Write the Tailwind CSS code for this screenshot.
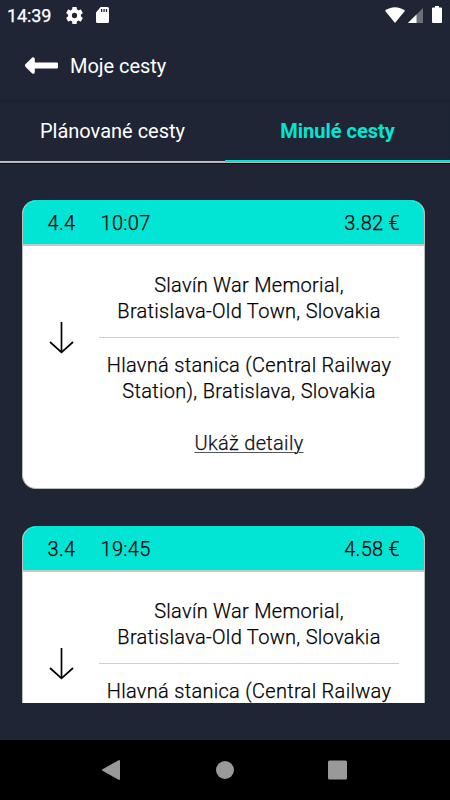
<!DOCTYPE html>
<html lang="sk">
<head>
<meta charset="utf-8">
<title>Moje cesty</title>
<script src="https://cdn.jsdelivr.net/npm/@tailwindcss/browser@4"></script>
</head>
<body class="flex h-[800px] w-[450px] flex-col overflow-hidden bg-[#1f2535] font-[Roboto,sans-serif] text-white">
  <div class="flex h-[31px] shrink-0 items-center pl-[7px] pr-[8px]">
    <span class="w-[45px] whitespace-nowrap text-[18px] leading-[31px] tracking-[-0.1px] [-webkit-text-stroke:0.25px_currentColor]">14:39</span>
    <svg class="ml-[14px] h-[17px] w-[17px]" viewBox="2 2 20 20" fill="currentColor"><path d="M19.43 12.98c.04-.32.07-.64.07-.98s-.03-.66-.07-.98l2.11-1.65c.19-.15.24-.42.12-.64l-2-3.46c-.12-.22-.39-.3-.61-.22l-2.49 1c-.52-.4-1.08-.73-1.69-.98l-.38-2.65A.49.49 0 0 0 14 2h-4c-.25 0-.46.18-.49.42l-.38 2.65c-.61.25-1.17.59-1.69.98l-2.49-1c-.23-.09-.49 0-.61.22l-2 3.46c-.13.22-.07.49.12.64l2.11 1.65c-.04.32-.07.65-.07.98s.03.66.07.98l-2.11 1.65c-.19.15-.24.42-.12.64l2 3.46c.12.22.39.3.61.22l2.49-1c.52.4 1.08.73 1.69.98l.38 2.65c.03.24.24.42.49.42h4c.25 0 .46-.18.49-.42l.38-2.65c.61-.25 1.17-.59 1.69-.98l2.49 1c.23.09.49 0 .61-.22l2-3.46c.12-.22.07-.49-.12-.64l-2.11-1.65zM12 15.1a3.1 3.1 0 1 1 0-6.2 3.1 3.1 0 0 1 0 6.2z"/></svg>
    <svg class="ml-[13px] mt-[-2px] h-[16px] w-[13px]" preserveAspectRatio="none" viewBox="0 0 14 16" fill="currentColor"><path fill-rule="evenodd" d="M5 0h7.500Q14 0 14 1.500v13Q14 16 12.500 16h-11Q0 16 0 14.500V5.500zM5.400 2v3h1.400V2zM8 2v3h1.400V2zM10.600 2v3H12V2z"/></svg>
    <svg class="mt-[-2px] ml-auto h-[16px] w-[20px]" viewBox="0 0 20 16" fill="currentColor"><path d="M0 3.800Q4.300.2 10 .2t10 3.600L10 16z"/></svg>
    <svg class="ml-[3px] size-[15px]" viewBox="0 0 15 15"><path d="M15 0v15H0z" fill="#6b7079"/><path d="M8.500 6.500V15H0z" fill="#fff"/></svg>
    <svg class="ml-[9px] mt-[-2px] h-[17px] w-[10px]" viewBox="0 0 10 17" fill="currentColor"><path d="M3 0h4v1.500h2q1 0 1 1V16q0 1-1 1H1q-1 0-1-1V2.500q0-1 1-1h2z"/></svg>
  </div>
  <header class="flex h-[69px] shrink-0 items-center pl-[25px]">
    <svg class="h-[17px] w-[33px]" viewBox="0 0 33 17" fill="currentColor"><path d="M.4 7.300 7.200.5Q8 0 9 .5q.8.500.8 1.500v3.600h22.200q1 0 1 1v3.800q0 1-1 1H9.800V15q0 1-.8 1.500-1 .5-1.800-.1L.4 9.700q-.8-1.200 0-2.400z"/></svg>
    <h1 class="ml-[12px] text-[20px] leading-[26px] tracking-[-0.05px]">Moje cesty</h1>
  </header>
  <nav class="grid h-[63px] shrink-0 grid-cols-2 border-b border-[#b5b2b2] text-center text-[20px] leading-[62px] shadow-[inset_0_3px_3px_-2px_#191e2c,0_1px_0_#0c1020]">
    <a class="h-[62px] border-b border-[#c6c3c1]">Plánované cesty</a>
    <a class="h-[62px] border-b-2 border-[#02e5d4] font-bold text-[#02e5d4]">Minulé cesty</a>
  </nav>
  <main class="mx-[22px] mt-[37px] h-[503px] w-[403px] shrink-0 overflow-hidden text-[20px] leading-[26px] font-light tracking-[0.3px] text-black [-webkit-text-stroke:0.25px_currentColor]">
    <article class="h-[289px] overflow-hidden rounded-[14px] border border-[#bdbdbd] border-t-[#02e5d4] bg-white">
      <div class="-mx-px flex h-[45px] items-center border-b-2 border-[#b8cfcc] bg-[#02e5d4] pl-[25.500px] pr-[25px] pt-px">
        <span class="w-[53px]">4.4</span><span>10:07</span><span class="ml-auto">3.82 €</span>
      </div>
      <div class="flex pl-[26px] pr-[25px] pt-[26px]">
        <svg class="mt-[49px] h-[33px] w-[25px]" viewBox="0 0 25 33" fill="none" stroke="currentColor" stroke-width="1.7"><path d="M12.500 1v30M1 21l11.500 10.300L24 21"/></svg>
        <div class="ml-[25px] w-[300px] text-center">
          <p class="border-b border-[#cfcfcf] pb-[13px]">Slavín War Memorial,<br>Bratislava-Old Town, Slovakia</p>
          <p class="pt-[14px]">Hlavná stanica (Central Railway<br>Station), Bratislava, Slovakia</p>
          <a class="mt-[26px] inline-block text-[#101020] underline decoration-[#555] decoration-1 underline-offset-2">Ukáž detaily</a>
        </div>
      </div>
    </article>
    <article class="mt-[37px] h-[289px] overflow-hidden rounded-[14px] border border-[#bdbdbd] border-t-[#02e5d4] bg-white">
      <div class="-mx-px flex h-[45px] items-center border-b-2 border-[#b8cfcc] bg-[#02e5d4] pl-[25.500px] pr-[25px] pt-px">
        <span class="w-[53px]">3.4</span><span>19:45</span><span class="ml-auto">4.58 €</span>
      </div>
      <div class="flex pl-[26px] pr-[25px] pt-[26px]">
        <svg class="mt-[49px] h-[33px] w-[25px]" viewBox="0 0 25 33" fill="none" stroke="currentColor" stroke-width="1.7"><path d="M12.500 1v30M1 21l11.500 10.300L24 21"/></svg>
        <div class="ml-[25px] w-[300px] text-center">
          <p class="border-b border-[#cfcfcf] pb-[13px]">Slavín War Memorial,<br>Bratislava-Old Town, Slovakia</p>
          <p class="pt-[14px]">Hlavná stanica (Central Railway</p>
        </div>
      </div>
    </article>
  </main>
  <footer class="mt-auto h-[60px] shrink-0 bg-black">
    <svg class="h-[60px] w-[450px]" viewBox="0 0 450 60" fill="#999"><path d="M119 20q1 0 1 1v18q0 1-1 1L102.500 30.700q-1-.7 0-1.400z"/><circle cx="225" cy="30" r="9"/><rect x="328" y="20.500" width="19" height="19" rx="1.500"/></svg>
  </footer>
</body>
</html>
